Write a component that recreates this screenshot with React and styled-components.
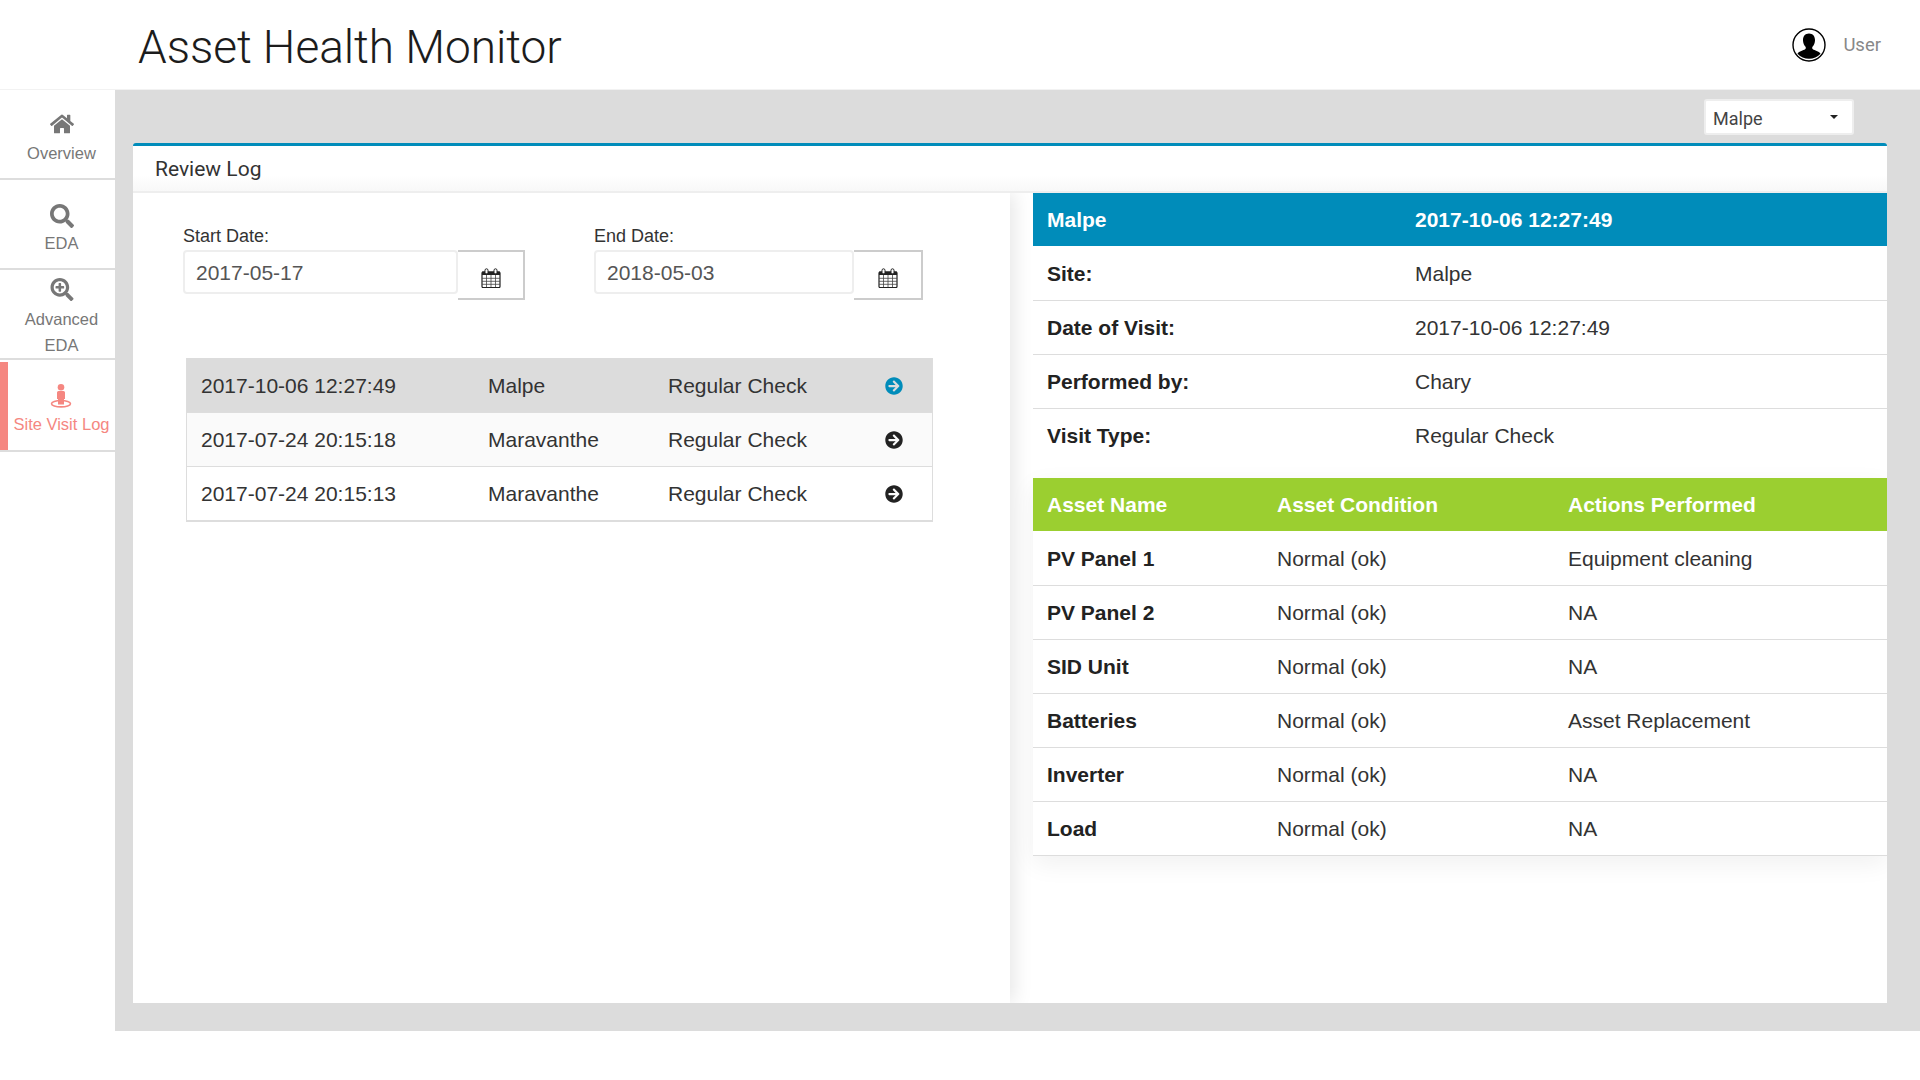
import React from 'react';
import styled, { createGlobalStyle } from 'styled-components';
import { FaHome, FaSearch, FaSearchPlus, FaArrowCircleRight } from 'react-icons/fa';

const GlobalStyle = createGlobalStyle`
  html, body {
    margin: 0;
    padding: 0;
    background: #fff;
    font-family: "Liberation Sans", Arial, sans-serif;
    color: #333;
  }
  * { box-sizing: border-box; }
`

const Page = styled.div`
  width: 1920px;
  height: 1080px;
  overflow: hidden;
`

const Header = styled.header`
  height: 90px;
  display: flex;
  align-items: center;
  justify-content: space-between;
  padding: 5px 39px 0 138px;
  border-bottom: 1px solid #f2f2f2;
`

const Title = styled.h1`
  margin: 0;
  font-family: Roboto, sans-serif;
  font-weight: 300;
  font-size: 46px;
  letter-spacing: -0.05px;
  color: #1c1c1c;
`

const UserBox = styled.div`
  display: flex;
  align-items: center;
  gap: 17px;
  font-family: Roboto, sans-serif;
  font-size: 18.5px;
  color: #888;
  margin-top: -5px;
`

const Body = styled.div`
  display: flex;
  height: 941px;
`

const Sidebar = styled.nav`
  width: 115px;
  flex: none;
`

const NavItem = styled.a`
  position: relative;
  display: flex;
  flex-direction: column;
  align-items: center;
  justify-content: center;
  height: ${({ $h }) => $h}px;
  padding: ${({ $pt }) => $pt}px 0 0 8px;
  border-bottom: 2px solid #ddd;
  color: ${({ $active }) => ($active ? '#f58781' : '#777')};
  font-size: 16.5px;
  line-height: 26px;
  text-align: center;
  svg { font-size: 24px; margin-bottom: ${({ $gap }) => $gap}px; }
  ${({ $active }) => $active && `
    &::before {
      content: '';
      position: absolute;
      left: 0;
      top: 2px;
      bottom: 0;
      width: 8px;
      background: #f58781;
    }
  `}
`

const Content = styled.main`
  flex: 1;
  background: #dcdcdc;
  padding: 9px 33px 28px 18px;
  display: flex;
  flex-direction: column;
`

const TopRow = styled.div`
  display: flex;
  justify-content: flex-end;
  height: 44px;
  padding-right: 33px;
`

const SiteSelect = styled.div`
  width: 150px;
  height: 36px;
  background: #fff;
  border: 2px solid #eee;
  border-radius: 3px;
  display: flex;
  align-items: center;
  justify-content: space-between;
  padding: 2px 14px 0 7px;
  font-family: Roboto, sans-serif;
  font-size: 18px;
  color: #444;
`

const Caret = styled.span`
  width: 0;
  height: 0;
  border-left: 4px solid transparent;
  border-right: 4px solid transparent;
  border-top: 4px solid #222;
  margin-top: -2px;
`

const Card = styled.section`
  flex: 1;
  background: #fff;
  border-top: 3px solid #008cba;
  border-radius: 3px 3px 0 0;
  display: flex;
  flex-direction: column;
  min-height: 0;
`

const CardTitle = styled.div`
  height: 47px;
  padding-left: 22px;
  display: flex;
  align-items: center;
  font-family: Roboto, sans-serif;
  font-size: 21px;
  color: #333;
  background: linear-gradient(#fff 65%, #f8f8f8);
  border-bottom: 2px solid #eee;
`

const Columns = styled.div`
  flex: 1;
  display: flex;
  min-height: 0;
  overflow: hidden;
`

const LeftPanel = styled.div`
  width: 877px;
  flex: none;
  padding: 33px 0 0 50px;
  box-shadow: 4px 0 18px rgba(0, 0, 0, 0.1);
`

const DateRow = styled.div`
  display: flex;
`

const DateField = styled.div`
  width: ${({ $w }) => $w}px;
  flex: none;
`

const Label = styled.div`
  font-size: 18px;
  line-height: 20px;
  margin-bottom: 4px;
  color: #333;
`

const InputGroup = styled.div`
  display: flex;
  align-items: flex-start;
`

const DateInput = styled.div`
  width: ${({ $w }) => $w}px;
  height: 44px;
  border: 2px solid #eee;
  border-radius: 4px;
  padding-left: 11px;
  font-size: 21px;
  line-height: 41px;
  color: #555;
`

const CalendarBtn = styled.div`
  width: ${({ $w }) => $w}px;
  height: 50px;
  border: 2px solid #ccc;
  border-left: none;
  display: flex;
  align-items: center;
  justify-content: center;
  padding-top: 5px;
`

const VisitList = styled.div`
  width: 747px;
  margin: 58px 0 0 3px;
  border: 1px solid #ddd;
  border-top: none;
`

const VisitRow = styled.div`
  display: grid;
  grid-template-columns: 287px 180px 216px 1fr;
  align-items: center;
  height: ${({ $h }) => $h}px;
  padding: 1px 0 0 14px;
  font-size: 21px;
  color: #333;
  background: ${({ $bg }) => $bg};
  border-bottom: 1px solid #ddd;
  svg { font-size: 18px; color: ${({ $iconColor }) => $iconColor}; display: block; margin-left: 1px; }
`

const RightPanel = styled.div`
  flex: 1;
  padding-left: 23px;
  min-width: 0;
`

const InfoTable = styled.div`
  margin-bottom: 15px;
`

const InfoRow = styled.div`
  display: grid;
  grid-template-columns: ${({ $cols }) => $cols};
  align-items: center;
  height: 54px;
  padding: 1px 0 0 14px;
  font-size: 21px;
  color: #333;
  border-bottom: 1px solid ${({ $last }) => ($last ? 'transparent' : '#ddd')};
`

const HeadRow = styled.div`
  display: grid;
  grid-template-columns: ${({ $cols }) => $cols};
  align-items: center;
  height: 53px;
  margin-bottom: 1px;
  padding-left: 14px;
  font-size: 21px;
  font-weight: 700;
  color: #fff;
  background: ${({ $bg }) => $bg};
`

const Strong = styled.span`
  font-weight: 700;
  color: #222;
`

const AssetTable = styled.div`
  box-shadow: 0 8px 24px rgba(0, 0, 0, 0.06);
`

const CalendarIcon = () => (
  <svg width="20" height="20" viewBox="0 0 20 20">
    <rect x="1" y="4" width="18" height="15.500" rx="1" fill="#fff" stroke="#222" strokeWidth="1.2" />
    <path d="M1 3.500h18v3.500H1z" fill="#222" />
    <path d="M1 10.300h18M1 13.300h18M1 16.300h18M5.500 7v12M10 7v12M14.500 7v12" stroke="#444" strokeWidth="0.8" fill="none" />
    <rect x="4" y="0.800" width="3" height="5" rx="1.500" fill="#fff" stroke="#222" strokeWidth="1" />
    <rect x="13" y="0.800" width="3" height="5" rx="1.500" fill="#fff" stroke="#222" strokeWidth="1" />
  </svg>
)

const UserIcon = () => (
  <svg width="34" height="34" viewBox="0 0 34 34">
    <circle cx="17" cy="17" r="16" fill="#fff" stroke="#000" strokeWidth="1.4" />
    <path d="M17 5.500c-4 0-6.200 3-6 7 .1 2.400 1 4.600 2.500 6.200.5.600.4 2-.4 2.600-1.600 1.100-6 1.900-7.600 4.400a15.500 15.500 0 0 0 23 0c-1.600-2.500-6-3.300-7.600-4.400-.8-.6-.9-2-.4-2.600 1.500-1.600 2.400-3.800 2.500-6.200.2-4-2-7-6-7z" fill="#000" />
  </svg>
)

const SiteVisitIcon = () => (
  <svg width="24" height="24" viewBox="0 0 24 24">
    <circle cx="11" cy="3.300" r="3.300" fill="currentColor" />
    <path d="M7 8.500a1.500 1.500 0 0 1 1.500-1.500h5a1.500 1.500 0 0 1 1.500 1.500v6.500h-1v5.500h-6V15H7z" fill="currentColor" />
    <ellipse cx="11" cy="19.700" rx="9.500" ry="3.200" fill="none" stroke="currentColor" strokeWidth="1.600" />
  </svg>
)

const navItems = [
  { label: 'Overview', icon: <FaHome />, h: 90, pt: 10, gap: 4 },
  { label: 'EDA', icon: <FaSearch />, h: 90, pt: 12, gap: 2 },
  { label: <>Advanced<br />EDA</>, icon: <FaSearchPlus />, h: 90, pt: 8, gap: 5 },
  { label: 'Site Visit Log', icon: <SiteVisitIcon />, h: 92, pt: 10, gap: 3, active: true },
]

const visits = [
  ['2017-10-06 12:27:49', 'Malpe', 'Regular Check'],
  ['2017-07-24 20:15:18', 'Maravanthe', 'Regular Check'],
  ['2017-07-24 20:15:13', 'Maravanthe', 'Regular Check'],
]

const info = [
  ['Site:', 'Malpe'],
  ['Date of Visit:', '2017-10-06 12:27:49'],
  ['Performed by:', 'Chary'],
  ['Visit Type:', 'Regular Check'],
]

const assets = [
  ['PV Panel 1', 'Normal (ok)', 'Equipment cleaning'],
  ['PV Panel 2', 'Normal (ok)', 'NA'],
  ['SID Unit', 'Normal (ok)', 'NA'],
  ['Batteries', 'Normal (ok)', 'Asset Replacement'],
  ['Inverter', 'Normal (ok)', 'NA'],
  ['Load', 'Normal (ok)', 'NA'],
]

const INFO_COLS = '368px 1fr'
const ASSET_COLS = '230px 291px 1fr'

const App = () => (
  <Page>
    <GlobalStyle />
    <Header>
      <Title>Asset Health Monitor</Title>
      <UserBox><UserIcon />User</UserBox>
    </Header>
    <Body>
      <Sidebar>
        {navItems.map((item, i) => (
          <NavItem key={i} $h={item.h} $pt={item.pt} $gap={item.gap} $active={item.active}>
            {item.icon}
            <span>{item.label}</span>
          </NavItem>
        ))}
      </Sidebar>
      <Content>
        <TopRow>
          <SiteSelect>Malpe<Caret /></SiteSelect>
        </TopRow>
        <Card>
          <CardTitle>Review Log</CardTitle>
          <Columns>
            <LeftPanel>
              <DateRow>
                <DateField $w={411}>
                  <Label>Start Date:</Label>
                  <InputGroup>
                    <DateInput $w={275}>2017-05-17</DateInput>
                    <CalendarBtn $w={67}><CalendarIcon /></CalendarBtn>
                  </InputGroup>
                </DateField>
                <DateField $w={330}>
                  <Label>End Date:</Label>
                  <InputGroup>
                    <DateInput $w={260}>2018-05-03</DateInput>
                    <CalendarBtn $w={69}><CalendarIcon /></CalendarBtn>
                  </InputGroup>
                </DateField>
              </DateRow>
              <VisitList>
                {visits.map((v, i) => (
                  <VisitRow key={i} $h={i === 0 ? 55 : 54} $bg={i === 0 ? '#dcdcdc' : i === 1 ? '#fafafa' : '#fff'} $iconColor={i === 0 ? '#008cba' : '#222'}>
                    <span>{v[0]}</span>
                    <span>{v[1]}</span>
                    <span>{v[2]}</span>
                    <FaArrowCircleRight />
                  </VisitRow>
                ))}
              </VisitList>
            </LeftPanel>
            <RightPanel>
              <InfoTable>
                <HeadRow $cols={INFO_COLS} $bg="#008cba">
                  <span>Malpe</span>
                  <span>2017-10-06 12:27:49</span>
                </HeadRow>
                {info.map((r, i) => (
                  <InfoRow key={r[0]} $cols={INFO_COLS} $last={i === info.length - 1}>
                    <Strong>{r[0]}</Strong>
                    <span>{r[1]}</span>
                  </InfoRow>
                ))}
              </InfoTable>
              <AssetTable>
                <HeadRow $cols={ASSET_COLS} $bg="#9bcf30">
                  <span>Asset Name</span>
                  <span>Asset Condition</span>
                  <span>Actions Performed</span>
                </HeadRow>
                {assets.map(r => (
                  <InfoRow key={r[0]} $cols={ASSET_COLS}>
                    <Strong>{r[0]}</Strong>
                    <span>{r[1]}</span>
                    <span>{r[2]}</span>
                  </InfoRow>
                ))}
              </AssetTable>
            </RightPanel>
          </Columns>
        </Card>
      </Content>
    </Body>
  </Page>
);

export default App;
